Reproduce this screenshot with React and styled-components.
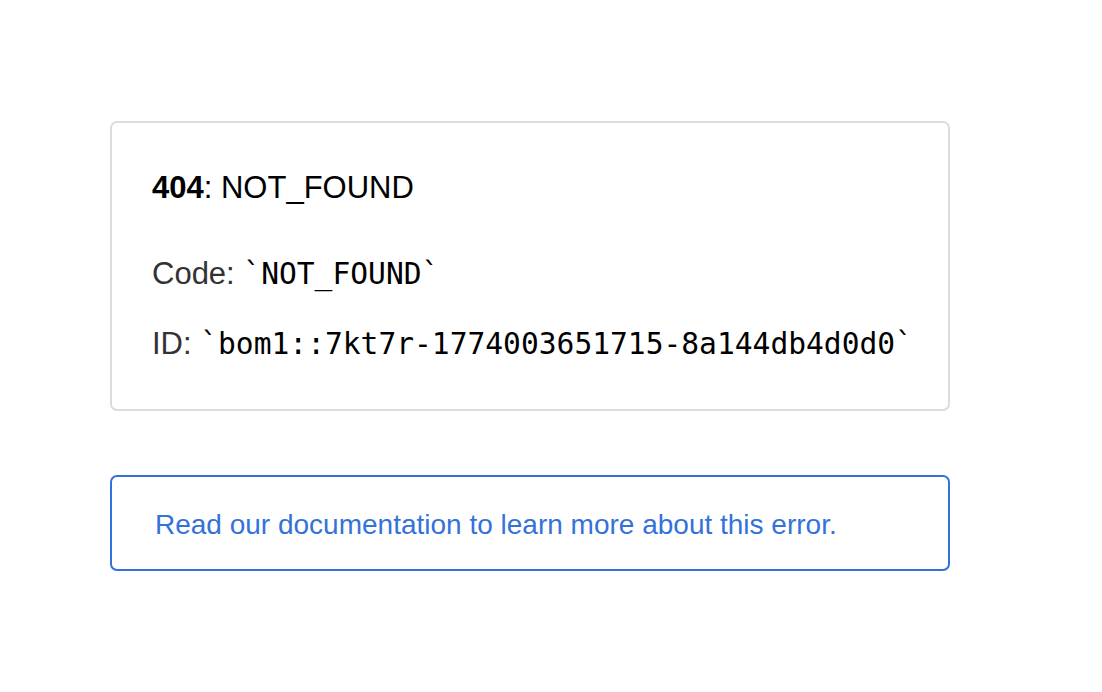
import React from "react";
import styled, { createGlobalStyle } from "styled-components";

const Global = createGlobalStyle`
  html, body {
    margin: 0;
    padding: 0;
    background: #fff;
  }
  body {
    font-family: "Liberation Sans", Arial, sans-serif;
    -webkit-font-smoothing: antialiased;
  }
`;

const Page = styled.main`
  display: flex;
  flex-direction: column;
  gap: 64px;
  width: 840px;
  padding: 121px 0 0 110px;
`;

const DevInfo = styled.section`
  display: flex;
  flex-direction: column;
  border: 2px solid #dcdcdc;
  border-radius: 7px;
  padding: 47px 30px 47px 40px;
`;

const ErrorCode = styled.h1`
  margin: 0;
  font-size: 31px;
  line-height: 36px;
  font-weight: 400;
  color: #000;

  strong {
    font-weight: 700;
  }
`;

const Detail = styled.p`
  margin: ${(p) => p.$top}px 0 0 0;
  font-size: 31px;
  line-height: 36px;
  color: #333;
  white-space: nowrap;
`;

const Mono = styled.code`
  font-family: "DejaVu Sans Mono", "Liberation Mono", monospace;
  font-size: 29.6px;
  color: #000;
`;

const DocsBox = styled.a`
  display: block;
  border: 2px solid #3571d6;
  border-radius: 7px;
  padding: 31px 43px 27px 43px;
  font-size: 28px;
  line-height: 34px;
  color: #3472da;
  text-decoration: none;
`;

export default function App() {
  return (
    <>
      <Global />
      <Page>
        <DevInfo>
          <ErrorCode>
            <strong>404</strong>: NOT_FOUND
          </ErrorCode>
          <Detail $top={50}>
            Code: <Mono>`NOT_FOUND`</Mono>
          </Detail>
          <Detail $top={34}>
            ID: <Mono>`bom1::7kt7r-1774003651715-8a144db4d0d0`</Mono>
          </Detail>
        </DevInfo>
        <DocsBox href="#">
          Read our documentation to learn more about this error.
        </DocsBox>
      </Page>
    </>
  );
}
